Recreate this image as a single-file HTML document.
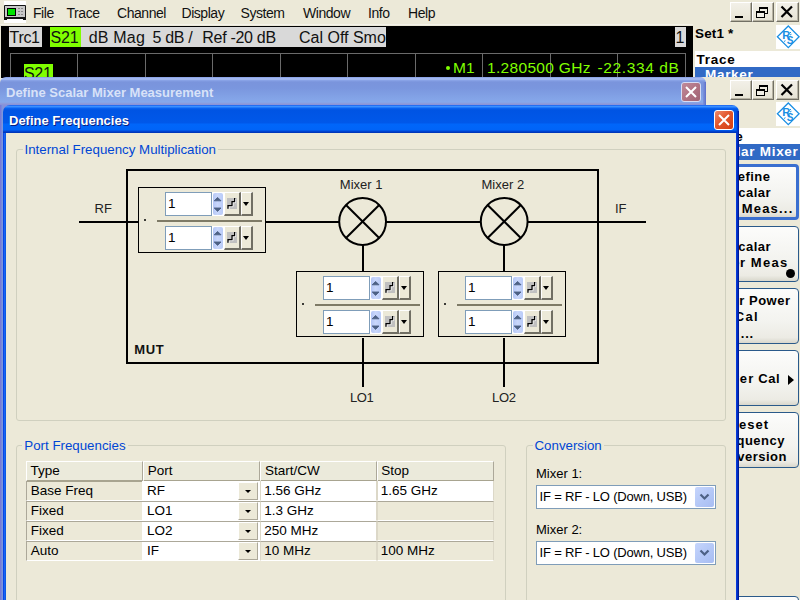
<!DOCTYPE html>
<html><head><meta charset="utf-8">
<style>
*{margin:0;padding:0;box-sizing:border-box}
html,body{width:800px;height:600px;overflow:hidden;background:#ECE9D8;font-family:"Liberation Sans",sans-serif;font-size:13px;color:#000;position:relative}
.a{position:absolute}
.t{position:absolute;white-space:nowrap;line-height:1}
.wbtn{position:absolute;height:20px;background:linear-gradient(#F2F0E8,#ECE9DC 60%,#E6E3D4);border-top:1px solid #fff;border-left:1px solid #fff;border-right:1px solid #716F64;border-bottom:1px solid #716F64;box-shadow:inset -1px -1px 0 #B8B4A4}
.hdr{position:absolute;top:27px;height:20px;background:#D9D9D9}
.grid{position:absolute;background:#6A6A6A}
.sk{position:absolute;left:700px;width:99px;height:56px;border:1px solid #2A5A8A;border-radius:4px;background:linear-gradient(#FCFCFB,#F3F3EF 60%,#ECEBE4 90%,#D9D7CC)}
.grp{position:absolute;border:1px solid #D0D0BF;border-radius:3px}
.glbl{background:#ECE9D8;padding:0 2px;margin-left:-2px}
</style></head><body>
<div class="a" style="left:4px;top:1px;width:22px;height:22px;background:#fff"></div>
<svg class="a" style="left:4px;top:1px" width="22" height="22" viewBox="0 0 22 22">
<rect x="0" y="4" width="22" height="14" rx="1" fill="#141414"/>
<rect x="1" y="5" width="20" height="11" fill="#C8C8C8"/>
<rect x="3" y="7" width="9" height="8" fill="#000"/>
<rect x="4" y="8" width="7" height="6" fill="#00E400"/>
<g fill="#8A8A8A"><rect x="14" y="7" width="2" height="1"/><rect x="17" y="7" width="2" height="1"/><rect x="14" y="10" width="2" height="1"/><rect x="17" y="10" width="2" height="1"/><rect x="14" y="13" width="2" height="1"/><rect x="17" y="13" width="2" height="1"/></g>
<rect x="0" y="16" width="22" height="3" fill="#141414"/>
<rect x="3" y="18" width="16" height="1" fill="#fff"/>
</svg>
<div class="t" style="left:33px;top:5.6px;font-size:14px;color:#111;letter-spacing:-0.45px">File</div>
<div class="t" style="left:66.5px;top:5.6px;font-size:14px;color:#111;letter-spacing:-0.45px">Trace</div>
<div class="t" style="left:117px;top:5.6px;font-size:14px;color:#111;letter-spacing:-0.45px">Channel</div>
<div class="t" style="left:181.5px;top:5.6px;font-size:14px;color:#111;letter-spacing:-0.45px">Display</div>
<div class="t" style="left:240.5px;top:5.6px;font-size:14px;color:#111;letter-spacing:-0.45px">System</div>
<div class="t" style="left:303px;top:5.6px;font-size:14px;color:#111;letter-spacing:-0.45px">Window</div>
<div class="t" style="left:368px;top:5.6px;font-size:14px;color:#111;letter-spacing:-0.45px">Info</div>
<div class="t" style="left:408px;top:5.6px;font-size:14px;color:#111;letter-spacing:-0.45px">Help</div>
<div class="wbtn" style="left:730px;top:2px;width:22px"></div><div class="wbtn" style="left:752px;top:2px;width:22px"></div><div class="wbtn" style="left:776px;top:2px;width:23px"></div><div class="a" style="left:735px;top:16px;width:8px;height:2px;background:#000"></div><svg class="a" style="left:755px;top:6px" width="15" height="13" viewBox="0 0 15 13"><g fill="none" stroke="#000"><rect x="4.5" y="1.5" width="8" height="6" /><rect x="1.5" y="5.5" width="8" height="6" fill="#F1EFE6"/></g><rect x="4" y="1" width="9" height="2" fill="#000"/><rect x="1" y="5" width="9" height="2" fill="#000"/></svg><svg class="a" style="left:780px;top:5px" width="14" height="13" viewBox="0 0 14 13"><path d="M1.5 1.5L12 12M12 1.5L1.5 12" stroke="#000" stroke-width="2.2" fill="none"/></svg>
<div class="a" style="left:0;top:24px;width:693px;height:1px;background:#F4F2EA"></div>
<div class="a" style="left:1px;top:26px;width:692px;height:52px;background:#000"></div>
<div class="hdr" style="left:9px;width:33px"></div>
<div class="hdr" style="left:50px;width:31px;background:#80FF00"></div>
<div class="hdr" style="left:81px;width:305px"></div>
<div class="hdr" style="left:675px;width:11px"></div>
<div class="grid" style="left:10px;top:53px;width:676px;height:1px"></div>
<div class="t" style="left:9.5px;top:30px;font-size:16px;color:#111;letter-spacing:-0.3px">Trc1</div>
<div class="t" style="left:50.5px;top:30px;font-size:16px;color:#111;letter-spacing:-0.2px">S21</div>
<div class="t" style="left:88.7px;top:30px;font-size:16px;color:#111;letter-spacing:0.2px">dB Mag</div>
<div class="t" style="left:152.5px;top:30px;font-size:16px;color:#111;letter-spacing:-0.3px">5 dB /</div>
<div class="t" style="left:202.3px;top:30px;font-size:16px;color:#111;letter-spacing:-0.3px">Ref -20 dB</div>
<div class="t" style="left:299px;top:30px;font-size:16px;color:#111;letter-spacing:0px">Cal Off Smo</div>
<div class="t" style="left:675.5px;top:30px;font-size:16px;color:#111;letter-spacing:0px">1</div>
<div class="grid" style="left:10px;top:53px;width:1px;height:25px"></div><div class="grid" style="left:77px;top:53px;width:1px;height:25px"></div><div class="grid" style="left:145px;top:53px;width:1px;height:25px"></div><div class="grid" style="left:212px;top:53px;width:1px;height:25px"></div><div class="grid" style="left:280px;top:53px;width:1px;height:25px"></div><div class="grid" style="left:347px;top:53px;width:1px;height:25px"></div><div class="grid" style="left:415px;top:53px;width:1px;height:25px"></div><div class="grid" style="left:482px;top:53px;width:1px;height:25px"></div><div class="grid" style="left:550px;top:53px;width:1px;height:25px"></div><div class="grid" style="left:617px;top:53px;width:1px;height:25px"></div><div class="grid" style="left:685px;top:53px;width:1px;height:25px"></div><div class="a" style="left:24px;top:64px;width:29px;height:14px;background:#80FF00"></div>
<div class="t" style="left:24px;top:66px;font-size:16px;color:#111;letter-spacing:-0.3px">S21</div>
<div class="a" style="left:446px;top:66px;width:4px;height:4px;border-radius:50%;background:#80FF00"></div>
<div class="t" style="left:453px;top:60px;font-size:15.5px;color:#80FF00">M1</div>
<div class="t" style="left:487px;top:60px;font-size:15.5px;color:#80FF00;letter-spacing:0.32px">1.280500 GHz</div>
<div class="t" style="left:597.5px;top:60px;font-size:15.5px;color:#80FF00;letter-spacing:0.62px">-22.334 dB</div>
<div class="t" style="left:695px;top:26.5px;font-size:13.5px;font-weight:bold;letter-spacing:0.15px">Set1 *</div>
<div class="a" style="left:776px;top:25px;width:24px;height:24px;background:#fff"></div><svg class="a" style="left:776px;top:25px" width="24" height="24" viewBox="0 0 24 24"><path d="M12.3 1L23.1 11.8L12.3 22.6L1.4 11.8Z" fill="none" stroke="#1A8FE3" stroke-width="1.3"/><text x="6.3" y="14.4" font-family="Liberation Sans" font-weight="bold" font-size="11" fill="#1A8FE3">R</text><text x="10.8" y="19.2" font-family="Liberation Sans" font-weight="bold" font-size="10" fill="#1A8FE3">S</text><path d="M13.5 8.2l1.5 -1 M14 10l1.5 -0.8 M8 16.5l1.5 -0.8" stroke="#1A8FE3" stroke-width="1"/></svg>
<div class="a" style="left:695px;top:51px;width:105px;height:16px;background:#fff"></div>
<div class="t" style="left:696.6px;top:53.2px;font-size:13.5px;font-weight:bold;letter-spacing:0.7px">Trace</div>
<div class="a" style="left:695px;top:67px;width:105px;height:10px;background:#316AC5"></div>
<div class="a" style="left:695px;top:67px;width:105px;height:10px;overflow:hidden"><div class="t" style="left:10px;top:1.4px;font-size:13.5px;font-weight:bold;color:#fff;letter-spacing:0.7px">Marker</div></div>
<div class="wbtn" style="left:730px;top:80px;width:22px"></div><div class="wbtn" style="left:752px;top:80px;width:22px"></div><div class="wbtn" style="left:776px;top:80px;width:23px"></div><div class="a" style="left:735px;top:94px;width:8px;height:2px;background:#000"></div><svg class="a" style="left:755px;top:84px" width="15" height="13" viewBox="0 0 15 13"><g fill="none" stroke="#000"><rect x="4.5" y="1.5" width="8" height="6" /><rect x="1.5" y="5.5" width="8" height="6" fill="#F1EFE6"/></g><rect x="4" y="1" width="9" height="2" fill="#000"/><rect x="1" y="5" width="9" height="2" fill="#000"/></svg><svg class="a" style="left:780px;top:83px" width="14" height="13" viewBox="0 0 14 13"><path d="M1.5 1.5L12 12M12 1.5L1.5 12" stroke="#000" stroke-width="2.2" fill="none"/></svg>
<div class="a" style="left:776px;top:102px;width:24px;height:24px;background:#fff"></div><svg class="a" style="left:776px;top:102px" width="24" height="24" viewBox="0 0 24 24"><path d="M12.3 1L23.1 11.8L12.3 22.6L1.4 11.8Z" fill="none" stroke="#1A8FE3" stroke-width="1.3"/><text x="6.3" y="14.4" font-family="Liberation Sans" font-weight="bold" font-size="11" fill="#1A8FE3">R</text><text x="10.8" y="19.2" font-family="Liberation Sans" font-weight="bold" font-size="10" fill="#1A8FE3">S</text><path d="M13.5 8.2l1.5 -1 M14 10l1.5 -0.8 M8 16.5l1.5 -0.8" stroke="#1A8FE3" stroke-width="1"/></svg>
<div class="a" style="left:695px;top:128px;width:105px;height:16px;background:#fff"></div>
<div class="t" style="right:56.5px;top:130px;font-size:13.5px;font-weight:bold;letter-spacing:0.7px">Mode</div>
<div class="a" style="left:695px;top:144px;width:105px;height:16px;background:#316AC5"></div>
<div class="t" style="right:1.5px;top:145px;font-size:13.5px;font-weight:bold;color:#fff;letter-spacing:0.7px">Scalar Mixer</div>
<div class="sk" style="top:164px;border:3px solid #3A6FD0"></div>
<div class="t" style="right:29.5px;top:170px;font-size:13px;font-weight:bold;letter-spacing:0.5px">Define</div>
<div class="t" style="right:28.899999999999977px;top:186px;font-size:13px;font-weight:bold;letter-spacing:0.5px">Scalar</div>
<div class="t" style="right:6.5px;top:202px;font-size:13px;font-weight:bold;letter-spacing:1.2px">Meas...</div>
<div class="sk" style="top:226px"></div>
<div class="t" style="right:28.899999999999977px;top:239.6px;font-size:13px;font-weight:bold;letter-spacing:0.5px">Scalar</div>
<div class="t" style="right:11.5px;top:256px;font-size:13px;font-weight:bold;letter-spacing:1.3px">Meas</div>
<div class="t" style="right:54.5px;top:256px;font-size:13px;font-weight:bold;letter-spacing:0.5px">Mixer</div>
<div class="a" style="left:786px;top:269px;width:9px;height:9px;border-radius:50%;background:#000"></div>
<div class="sk" style="top:288px"></div>
<div class="t" style="right:9.5px;top:294.3px;font-size:13px;font-weight:bold;letter-spacing:0.5px">Mixer Power</div>
<div class="t" style="right:41px;top:310.3px;font-size:13px;font-weight:bold;letter-spacing:1.3px">Cal</div>
<div class="t" style="right:46px;top:327px;font-size:13px;font-weight:bold;letter-spacing:0.8px">...</div>
<div class="sk" style="top:350px"></div>
<div class="t" style="right:20px;top:372.3px;font-size:13px;font-weight:bold;letter-spacing:0.5px">Cal</div>
<div class="t" style="right:45.5px;top:372.3px;font-size:13px;font-weight:bold;letter-spacing:1.2px">Power</div>
<div class="a" style="left:788px;top:375px;width:0;height:0;border-top:5px solid transparent;border-bottom:5px solid transparent;border-left:6px solid #000"></div>
<div class="sk" style="top:412px"></div>
<div class="t" style="right:31px;top:418.4px;font-size:13px;font-weight:bold;letter-spacing:1.0px">Reset</div>
<div class="t" style="right:15px;top:434.4px;font-size:13px;font-weight:bold;letter-spacing:0.5px">Frequency</div>
<div class="t" style="right:13px;top:450.4px;font-size:13px;font-weight:bold;letter-spacing:0.5px">Conversion</div>
<div class="sk" style="top:596px"></div>
<div class="a" style="left:0;top:77px;width:706px;height:600px;border-radius:6px 6px 0 0;background:linear-gradient(#7890E0,#A4BAF0 1px,#A0B6F0 2.5px,#88A2E6 3.5px,#7A94DC 5px,#7A96DE 11px,#82A2E6 20px,#86A8EA 25px,#8C9CDC 26.5px,#8890D8 28px)"></div>
<div class="a" style="left:0;top:105px;width:3px;height:500px;background:linear-gradient(90deg,#7474D8,#7E9CDC)"></div>
<div class="a" style="left:703px;top:82px;width:3px;height:23px;background:linear-gradient(90deg,#7C94DC,#6A7ED2 2px,#5A6CC8)"></div>
<div class="t" style="left:6px;top:86px;font-size:13px;font-weight:bold;color:#D8E2F8">Define Scalar Mixer Measurement</div>
<div class="a" style="left:681px;top:82px;width:20px;height:20px;border:1px solid #D6DCF4;border-radius:3px;background:linear-gradient(135deg,#C08A9A,#AE7080 60%,#A06474)"></div>
<svg class="a" style="left:681px;top:82px" width="20" height="20" viewBox="0 0 20 20"><path d="M5 5L15 15M15 5L5 15" stroke="#fff" stroke-width="2" fill="none"/></svg>
<div class="a" style="left:3px;top:105px;width:736px;height:600px;border-radius:7px 7px 0 0;background:linear-gradient(#0A48E4,#3C94FF 1px,#3A8CFF 2px,#0A64F2 3px,#0054E3 5px,#0058EA 18px,#0066FA 19px,#0064F8 25px,#0048D8 26px,#0030B0 28px)"></div>
<div class="a" style="left:3px;top:133px;width:736px;height:500px;background:linear-gradient(90deg,#0434E0,#1466F4 1.5px,#0A50DC 3px)"></div>
<div class="a" style="left:6px;top:133px;width:730px;height:500px;background:#ECE9D8"></div>
<div class="a" style="left:736px;top:133px;width:3px;height:500px;background:linear-gradient(90deg,#0A3CE8,#0030C0 1.5px,#000C80 3px)"></div>
<div class="a" style="left:736px;top:111px;width:3px;height:22px;background:linear-gradient(90deg,rgba(0,60,220,0),#0038C8 1.5px,#0018A0 3px)"></div>
<div class="t" style="left:9px;top:113.5px;font-size:13px;font-weight:bold;color:#fff;text-shadow:1px 1px 0 #0A1E80">Define Frequencies</div>
<div class="a" style="left:714px;top:110px;width:20px;height:20px;border:1px solid #fff;border-radius:3px;background:linear-gradient(135deg,#F08C6C,#E2562C 45%,#D43E12)"></div>
<svg class="a" style="left:714px;top:110px" width="20" height="20" viewBox="0 0 20 20"><path d="M5 5L15 15M15 5L5 15" stroke="#fff" stroke-width="2" fill="none"/></svg>
<div class="grp" style="left:16px;top:149px;width:710px;height:272px"></div>
<div class="grp" style="left:16px;top:445px;width:490px;height:200px"></div>
<div class="grp" style="left:526px;top:445px;width:200px;height:200px"></div>
<div class="t" style="left:24.5px;top:142.7px;font-size:13.3px;color:#0046D5"><span class="glbl">Internal Frequency Multiplication</span></div>
<div class="t" style="left:24.3px;top:438.7px;font-size:13.3px;color:#0046D5"><span class="glbl">Port Frequencies</span></div>
<div class="t" style="left:534.5px;top:438.7px;font-size:13.3px;color:#0046D5"><span class="glbl">Conversion</span></div>
<svg class="a" style="left:0;top:0" width="800" height="600" viewBox="0 0 800 600">
<g fill="none" stroke="#000" stroke-width="2">
<rect x="127" y="170" width="471" height="193"/>
<line x1="79" y1="222" x2="138" y2="222"/>
<line x1="266" y1="222" x2="339" y2="222"/>
<line x1="386" y1="222" x2="481" y2="222"/>
<line x1="528" y1="222" x2="646" y2="222"/>
<circle cx="362.6" cy="221.5" r="23.4"/>
<circle cx="504.2" cy="221.5" r="23.4"/>
<line x1="346" y1="205" x2="379.2" y2="238"/>
<line x1="379.2" y1="205" x2="346" y2="238"/>
<line x1="487.6" y1="205" x2="520.8" y2="238"/>
<line x1="520.8" y1="205" x2="487.6" y2="238"/>
<line x1="363" y1="245" x2="363" y2="271"/>
<line x1="504" y1="245" x2="504" y2="271"/>
<line x1="363" y1="338" x2="363" y2="387"/>
<line x1="504" y1="338" x2="504" y2="387"/>
</g></svg>
<div class="a" style="left:138px;top:187px;width:128px;height:66px;border:1px solid #000"></div><div class="a" style="left:144px;top:219px;width:2.4px;height:2.4px;background:#000;border-radius:50%"></div><div class="a" style="left:157px;top:220px;width:105px;height:2px;background:#7E7A66"></div><div class="a" style="left:165px;top:192px;width:47px;height:24px;border:1px solid #7F9DB9;background:#fff"></div><div class="t" style="left:168px;top:196.5px;font-size:13.5px">1</div><div class="a" style="left:212px;top:192px;width:12px;height:24px;background:#fff"></div><div class="a" style="left:213px;top:193px;width:10px;height:22px;border-radius:2px;background:linear-gradient(90deg,#B4C6F6,#C9D7FB 45%,#B9CBF8)"></div><svg class="a" style="left:213px;top:193px" width="10" height="22" viewBox="0 0 10 22"><path d="M1.2 7.8L4.6 4.4L8 7.8Z M1.2 15L4.6 18.4L8 15Z" fill="#4D6185" stroke="#4D6185" stroke-width="0.9" stroke-linejoin="round"/></svg><div class="a" style="left:224px;top:192px;width:17px;height:24px;background:#ECE9D8;border-top:1px solid #fff;border-left:1px solid #fff;border-right:2px solid #716F64;border-bottom:2px solid #716F64"></div><div class="a" style="left:227px;top:198px;width:10px;height:11px;background:#C0C0C0"></div><svg class="a" style="left:227px;top:198px" width="10" height="11" viewBox="0 0 10 11"><path d="M2 11.5V8.6H6V4.6H8.6V1" fill="none" stroke="#fff" stroke-width="1"/><path d="M1 10.8V7.6H5V3.6H7.6V0" fill="none" stroke="#000" stroke-width="1.2"/></svg><div class="a" style="left:241px;top:192px;width:12px;height:24px;background:#ECE9D8;border-top:1px solid #fff;border-left:1px solid #fff;border-right:2px solid #716F64;border-bottom:2px solid #716F64"></div><div class="a" style="left:243px;top:202px;width:0;height:0;border-left:3.5px solid transparent;border-right:3.5px solid transparent;border-top:4px solid #000"></div><div class="a" style="left:165px;top:226px;width:47px;height:24px;border:1px solid #7F9DB9;background:#fff"></div><div class="t" style="left:168px;top:230.5px;font-size:13.5px">1</div><div class="a" style="left:212px;top:226px;width:12px;height:24px;background:#fff"></div><div class="a" style="left:213px;top:227px;width:10px;height:22px;border-radius:2px;background:linear-gradient(90deg,#B4C6F6,#C9D7FB 45%,#B9CBF8)"></div><svg class="a" style="left:213px;top:227px" width="10" height="22" viewBox="0 0 10 22"><path d="M1.2 7.8L4.6 4.4L8 7.8Z M1.2 15L4.6 18.4L8 15Z" fill="#4D6185" stroke="#4D6185" stroke-width="0.9" stroke-linejoin="round"/></svg><div class="a" style="left:224px;top:226px;width:17px;height:24px;background:#ECE9D8;border-top:1px solid #fff;border-left:1px solid #fff;border-right:2px solid #716F64;border-bottom:2px solid #716F64"></div><div class="a" style="left:227px;top:232px;width:10px;height:11px;background:#C0C0C0"></div><svg class="a" style="left:227px;top:232px" width="10" height="11" viewBox="0 0 10 11"><path d="M2 11.5V8.6H6V4.6H8.6V1" fill="none" stroke="#fff" stroke-width="1"/><path d="M1 10.8V7.6H5V3.6H7.6V0" fill="none" stroke="#000" stroke-width="1.2"/></svg><div class="a" style="left:241px;top:226px;width:12px;height:24px;background:#ECE9D8;border-top:1px solid #fff;border-left:1px solid #fff;border-right:2px solid #716F64;border-bottom:2px solid #716F64"></div><div class="a" style="left:243px;top:236px;width:0;height:0;border-left:3.5px solid transparent;border-right:3.5px solid transparent;border-top:4px solid #000"></div>
<div class="a" style="left:296px;top:271px;width:128px;height:66px;border:1px solid #000"></div><div class="a" style="left:302px;top:303px;width:2.4px;height:2.4px;background:#000;border-radius:50%"></div><div class="a" style="left:315px;top:304px;width:105px;height:2px;background:#7E7A66"></div><div class="a" style="left:323px;top:276px;width:47px;height:24px;border:1px solid #7F9DB9;background:#fff"></div><div class="t" style="left:326px;top:280.5px;font-size:13.5px">1</div><div class="a" style="left:370px;top:276px;width:12px;height:24px;background:#fff"></div><div class="a" style="left:371px;top:277px;width:10px;height:22px;border-radius:2px;background:linear-gradient(90deg,#B4C6F6,#C9D7FB 45%,#B9CBF8)"></div><svg class="a" style="left:371px;top:277px" width="10" height="22" viewBox="0 0 10 22"><path d="M1.2 7.8L4.6 4.4L8 7.8Z M1.2 15L4.6 18.4L8 15Z" fill="#4D6185" stroke="#4D6185" stroke-width="0.9" stroke-linejoin="round"/></svg><div class="a" style="left:382px;top:276px;width:17px;height:24px;background:#ECE9D8;border-top:1px solid #fff;border-left:1px solid #fff;border-right:2px solid #716F64;border-bottom:2px solid #716F64"></div><div class="a" style="left:385px;top:282px;width:10px;height:11px;background:#C0C0C0"></div><svg class="a" style="left:385px;top:282px" width="10" height="11" viewBox="0 0 10 11"><path d="M2 11.5V8.6H6V4.6H8.6V1" fill="none" stroke="#fff" stroke-width="1"/><path d="M1 10.8V7.6H5V3.6H7.6V0" fill="none" stroke="#000" stroke-width="1.2"/></svg><div class="a" style="left:399px;top:276px;width:12px;height:24px;background:#ECE9D8;border-top:1px solid #fff;border-left:1px solid #fff;border-right:2px solid #716F64;border-bottom:2px solid #716F64"></div><div class="a" style="left:401px;top:286px;width:0;height:0;border-left:3.5px solid transparent;border-right:3.5px solid transparent;border-top:4px solid #000"></div><div class="a" style="left:323px;top:310px;width:47px;height:24px;border:1px solid #7F9DB9;background:#fff"></div><div class="t" style="left:326px;top:314.5px;font-size:13.5px">1</div><div class="a" style="left:370px;top:310px;width:12px;height:24px;background:#fff"></div><div class="a" style="left:371px;top:311px;width:10px;height:22px;border-radius:2px;background:linear-gradient(90deg,#B4C6F6,#C9D7FB 45%,#B9CBF8)"></div><svg class="a" style="left:371px;top:311px" width="10" height="22" viewBox="0 0 10 22"><path d="M1.2 7.8L4.6 4.4L8 7.8Z M1.2 15L4.6 18.4L8 15Z" fill="#4D6185" stroke="#4D6185" stroke-width="0.9" stroke-linejoin="round"/></svg><div class="a" style="left:382px;top:310px;width:17px;height:24px;background:#ECE9D8;border-top:1px solid #fff;border-left:1px solid #fff;border-right:2px solid #716F64;border-bottom:2px solid #716F64"></div><div class="a" style="left:385px;top:316px;width:10px;height:11px;background:#C0C0C0"></div><svg class="a" style="left:385px;top:316px" width="10" height="11" viewBox="0 0 10 11"><path d="M2 11.5V8.6H6V4.6H8.6V1" fill="none" stroke="#fff" stroke-width="1"/><path d="M1 10.8V7.6H5V3.6H7.6V0" fill="none" stroke="#000" stroke-width="1.2"/></svg><div class="a" style="left:399px;top:310px;width:12px;height:24px;background:#ECE9D8;border-top:1px solid #fff;border-left:1px solid #fff;border-right:2px solid #716F64;border-bottom:2px solid #716F64"></div><div class="a" style="left:401px;top:320px;width:0;height:0;border-left:3.5px solid transparent;border-right:3.5px solid transparent;border-top:4px solid #000"></div>
<div class="a" style="left:438px;top:271px;width:128px;height:66px;border:1px solid #000"></div><div class="a" style="left:444px;top:303px;width:2.4px;height:2.4px;background:#000;border-radius:50%"></div><div class="a" style="left:457px;top:304px;width:105px;height:2px;background:#7E7A66"></div><div class="a" style="left:465px;top:276px;width:47px;height:24px;border:1px solid #7F9DB9;background:#fff"></div><div class="t" style="left:468px;top:280.5px;font-size:13.5px">1</div><div class="a" style="left:512px;top:276px;width:12px;height:24px;background:#fff"></div><div class="a" style="left:513px;top:277px;width:10px;height:22px;border-radius:2px;background:linear-gradient(90deg,#B4C6F6,#C9D7FB 45%,#B9CBF8)"></div><svg class="a" style="left:513px;top:277px" width="10" height="22" viewBox="0 0 10 22"><path d="M1.2 7.8L4.6 4.4L8 7.8Z M1.2 15L4.6 18.4L8 15Z" fill="#4D6185" stroke="#4D6185" stroke-width="0.9" stroke-linejoin="round"/></svg><div class="a" style="left:524px;top:276px;width:17px;height:24px;background:#ECE9D8;border-top:1px solid #fff;border-left:1px solid #fff;border-right:2px solid #716F64;border-bottom:2px solid #716F64"></div><div class="a" style="left:527px;top:282px;width:10px;height:11px;background:#C0C0C0"></div><svg class="a" style="left:527px;top:282px" width="10" height="11" viewBox="0 0 10 11"><path d="M2 11.5V8.6H6V4.6H8.6V1" fill="none" stroke="#fff" stroke-width="1"/><path d="M1 10.8V7.6H5V3.6H7.6V0" fill="none" stroke="#000" stroke-width="1.2"/></svg><div class="a" style="left:541px;top:276px;width:12px;height:24px;background:#ECE9D8;border-top:1px solid #fff;border-left:1px solid #fff;border-right:2px solid #716F64;border-bottom:2px solid #716F64"></div><div class="a" style="left:543px;top:286px;width:0;height:0;border-left:3.5px solid transparent;border-right:3.5px solid transparent;border-top:4px solid #000"></div><div class="a" style="left:465px;top:310px;width:47px;height:24px;border:1px solid #7F9DB9;background:#fff"></div><div class="t" style="left:468px;top:314.5px;font-size:13.5px">1</div><div class="a" style="left:512px;top:310px;width:12px;height:24px;background:#fff"></div><div class="a" style="left:513px;top:311px;width:10px;height:22px;border-radius:2px;background:linear-gradient(90deg,#B4C6F6,#C9D7FB 45%,#B9CBF8)"></div><svg class="a" style="left:513px;top:311px" width="10" height="22" viewBox="0 0 10 22"><path d="M1.2 7.8L4.6 4.4L8 7.8Z M1.2 15L4.6 18.4L8 15Z" fill="#4D6185" stroke="#4D6185" stroke-width="0.9" stroke-linejoin="round"/></svg><div class="a" style="left:524px;top:310px;width:17px;height:24px;background:#ECE9D8;border-top:1px solid #fff;border-left:1px solid #fff;border-right:2px solid #716F64;border-bottom:2px solid #716F64"></div><div class="a" style="left:527px;top:316px;width:10px;height:11px;background:#C0C0C0"></div><svg class="a" style="left:527px;top:316px" width="10" height="11" viewBox="0 0 10 11"><path d="M2 11.5V8.6H6V4.6H8.6V1" fill="none" stroke="#fff" stroke-width="1"/><path d="M1 10.8V7.6H5V3.6H7.6V0" fill="none" stroke="#000" stroke-width="1.2"/></svg><div class="a" style="left:541px;top:310px;width:12px;height:24px;background:#ECE9D8;border-top:1px solid #fff;border-left:1px solid #fff;border-right:2px solid #716F64;border-bottom:2px solid #716F64"></div><div class="a" style="left:543px;top:320px;width:0;height:0;border-left:3.5px solid transparent;border-right:3.5px solid transparent;border-top:4px solid #000"></div>
<div class="t" style="left:94.5px;top:202px;font-size:13px;color:#222">RF</div>
<div class="t" style="left:615px;top:202px;font-size:13px;color:#222">IF</div>
<div class="t" style="left:339.8px;top:178.3px;font-size:13px;color:#222">Mixer 1</div>
<div class="t" style="left:481.5px;top:178.3px;font-size:13px;color:#222">Mixer 2</div>
<div class="t" style="left:350px;top:390.5px;font-size:13px;color:#222;letter-spacing:-0.4px">LO1</div>
<div class="t" style="left:492px;top:390.5px;font-size:13px;color:#222;letter-spacing:-0.3px">LO2</div>
<div class="t" style="left:134.3px;top:343.3px;font-size:13px;font-weight:bold;color:#111;letter-spacing:0.6px">MUT</div>
<div class="a" style="left:26px;top:461px;width:117px;height:21px;background:#EBEADB;border-top:1px solid #fff;border-left:1px solid #fff;border-right:1px solid #ACA899;border-bottom:2px solid #A8A490"></div>
<div class="a" style="left:143px;top:461px;width:117px;height:21px;background:#EBEADB;border-top:1px solid #fff;border-left:1px solid #fff;border-right:1px solid #ACA899;border-bottom:2px solid #A8A490"></div>
<div class="a" style="left:260px;top:461px;width:117px;height:21px;background:#EBEADB;border-top:1px solid #fff;border-left:1px solid #fff;border-right:1px solid #ACA899;border-bottom:2px solid #A8A490"></div>
<div class="a" style="left:377px;top:461px;width:117px;height:21px;background:#EBEADB;border-top:1px solid #fff;border-left:1px solid #fff;border-right:1px solid #ACA899;border-bottom:2px solid #A8A490"></div>
<div class="t" style="left:30.5px;top:463.5px;font-size:13.5px">Type</div>
<div class="t" style="left:147.7px;top:463.5px;font-size:13.5px">Port</div>
<div class="t" style="left:264.9px;top:463.5px;font-size:13.5px">Start/CW</div>
<div class="t" style="left:381.3px;top:463.5px;font-size:13.5px">Stop</div>
<div class="a" style="left:26px;top:481px;width:116px;height:20px;border-left:1px solid #ACA899;border-bottom:1px solid #fff"></div><div class="a" style="left:142px;top:481px;width:118px;height:20px;background:#fff;border-bottom:1px solid #fff"></div><div class="a" style="left:238px;top:482px;width:20px;height:18px;background:#ECE9D8;border-top:1px solid #fff;border-left:1px solid #fff;border-right:1px solid #ACA899;border-bottom:1px solid #ACA899"></div><div class="a" style="left:245px;top:490px;width:0;height:0;border-left:3px solid transparent;border-right:3px solid transparent;border-top:3px solid #000"></div><div class="a" style="left:260px;top:481px;width:117px;height:20px;background:#fff;border-left:1px solid #DCD8C8;border-right:1px solid #DCD8C8;border-bottom:1px solid #fff"></div><div class="a" style="left:377px;top:481px;width:117px;height:20px;background:#fff;border-left:1px solid #DCD8C8;border-right:1px solid #DCD8C8;border-bottom:1px solid #fff"></div>
<div class="t" style="left:30.8px;top:483.5px;font-size:13.5px">Base Freq</div>
<div class="t" style="left:147px;top:483.5px;font-size:13.5px">RF</div>
<div class="t" style="left:264.2px;top:483.5px;font-size:13.5px">1.56 GHz</div>
<div class="t" style="left:380.8px;top:483.5px;font-size:13.5px">1.65 GHz</div>
<div class="a" style="left:26px;top:501px;width:116px;height:20px;border-top:1px solid #ACA899;border-left:1px solid #ACA899;border-bottom:1px solid #fff"></div><div class="a" style="left:142px;top:501px;width:118px;height:20px;background:#fff;border-top:1px solid #ACA899;border-bottom:1px solid #fff"></div><div class="a" style="left:238px;top:502px;width:20px;height:18px;background:#ECE9D8;border-top:1px solid #fff;border-left:1px solid #fff;border-right:1px solid #ACA899;border-bottom:1px solid #ACA899"></div><div class="a" style="left:245px;top:510px;width:0;height:0;border-left:3px solid transparent;border-right:3px solid transparent;border-top:3px solid #000"></div><div class="a" style="left:260px;top:501px;width:117px;height:20px;background:#fff;border-top:1px solid #ACA899;border-left:1px solid #DCD8C8;border-right:1px solid #DCD8C8;border-bottom:1px solid #fff"></div><div class="a" style="left:377px;top:501px;width:117px;height:20px;background:#ECE9D8;border-top:1px solid #ACA899;border-left:1px solid #DCD8C8;border-right:1px solid #DCD8C8;border-bottom:1px solid #fff"></div>
<div class="t" style="left:30.8px;top:503.5px;font-size:13.5px">Fixed</div>
<div class="t" style="left:147px;top:503.5px;font-size:13.5px">LO1</div>
<div class="t" style="left:264.2px;top:503.5px;font-size:13.5px">1.3 GHz</div>
<div class="a" style="left:26px;top:521px;width:116px;height:20px;border-top:1px solid #ACA899;border-left:1px solid #ACA899;border-bottom:1px solid #fff"></div><div class="a" style="left:142px;top:521px;width:118px;height:20px;background:#fff;border-top:1px solid #ACA899;border-bottom:1px solid #fff"></div><div class="a" style="left:238px;top:522px;width:20px;height:18px;background:#ECE9D8;border-top:1px solid #fff;border-left:1px solid #fff;border-right:1px solid #ACA899;border-bottom:1px solid #ACA899"></div><div class="a" style="left:245px;top:530px;width:0;height:0;border-left:3px solid transparent;border-right:3px solid transparent;border-top:3px solid #000"></div><div class="a" style="left:260px;top:521px;width:117px;height:20px;background:#fff;border-top:1px solid #ACA899;border-left:1px solid #DCD8C8;border-right:1px solid #DCD8C8;border-bottom:1px solid #fff"></div><div class="a" style="left:377px;top:521px;width:117px;height:20px;background:#ECE9D8;border-top:1px solid #ACA899;border-left:1px solid #DCD8C8;border-right:1px solid #DCD8C8;border-bottom:1px solid #fff"></div>
<div class="t" style="left:30.8px;top:523.5px;font-size:13.5px">Fixed</div>
<div class="t" style="left:147px;top:523.5px;font-size:13.5px">LO2</div>
<div class="t" style="left:264.2px;top:523.5px;font-size:13.5px">250 MHz</div>
<div class="a" style="left:26px;top:541px;width:116px;height:20px;border-top:1px solid #ACA899;border-left:1px solid #ACA899;border-bottom:1px solid #fff"></div><div class="a" style="left:142px;top:541px;width:118px;height:20px;background:#fff;border-top:1px solid #ACA899;border-bottom:1px solid #fff"></div><div class="a" style="left:238px;top:542px;width:20px;height:18px;background:#ECE9D8;border-top:1px solid #fff;border-left:1px solid #fff;border-right:1px solid #ACA899;border-bottom:1px solid #ACA899"></div><div class="a" style="left:245px;top:550px;width:0;height:0;border-left:3px solid transparent;border-right:3px solid transparent;border-top:3px solid #000"></div><div class="a" style="left:260px;top:541px;width:117px;height:20px;background:#ECE9D8;border-top:1px solid #ACA899;border-left:1px solid #DCD8C8;border-right:1px solid #DCD8C8;border-bottom:1px solid #fff"></div><div class="a" style="left:377px;top:541px;width:117px;height:20px;background:#ECE9D8;border-top:1px solid #ACA899;border-left:1px solid #DCD8C8;border-right:1px solid #DCD8C8;border-bottom:1px solid #fff"></div>
<div class="t" style="left:30.8px;top:543.5px;font-size:13.5px">Auto</div>
<div class="t" style="left:147px;top:543.5px;font-size:13.5px">IF</div>
<div class="t" style="left:264.2px;top:543.5px;font-size:13.5px">10 MHz</div>
<div class="t" style="left:380.8px;top:543.5px;font-size:13.5px">100 MHz</div>
<div class="t" style="left:536px;top:467px;font-size:13px">Mixer 1:</div>
<div class="a" style="left:536px;top:485px;width:180px;height:24px;border:1px solid #7F9DB9;background:#fff"></div>
<div class="t" style="left:539.6px;top:490.2px;font-size:13px;letter-spacing:-0.2px">IF = RF - LO (Down, USB)</div>
<div class="a" style="left:695px;top:487px;width:19px;height:20px;border-radius:2px;background:linear-gradient(135deg,#C6D5FC,#B2C6F6 60%,#A8BDF2)"></div><svg class="a" style="left:699px;top:493px" width="11" height="8" viewBox="0 0 11 8"><path d="M1.5 1.5L5.5 5.5L9.5 1.5" fill="none" stroke="#4D6185" stroke-width="2.2"/></svg>
<div class="t" style="left:536px;top:523px;font-size:13px">Mixer 2:</div>
<div class="a" style="left:536px;top:541px;width:180px;height:24px;border:1px solid #7F9DB9;background:#fff"></div>
<div class="t" style="left:539.6px;top:546.2px;font-size:13px;letter-spacing:-0.2px">IF = RF - LO (Down, USB)</div>
<div class="a" style="left:695px;top:543px;width:19px;height:20px;border-radius:2px;background:linear-gradient(135deg,#C6D5FC,#B2C6F6 60%,#A8BDF2)"></div><svg class="a" style="left:699px;top:549px" width="11" height="8" viewBox="0 0 11 8"><path d="M1.5 1.5L5.5 5.5L9.5 1.5" fill="none" stroke="#4D6185" stroke-width="2.2"/></svg>
</body></html>
